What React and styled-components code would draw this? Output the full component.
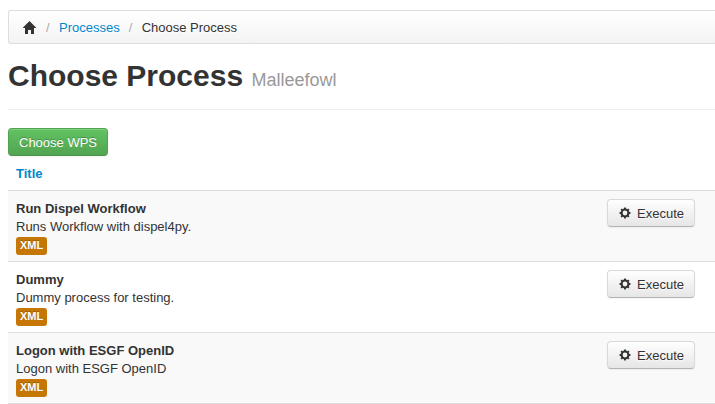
import React from "react";
import styled, { createGlobalStyle } from "styled-components";

const GlobalStyle = createGlobalStyle`
  * { box-sizing: border-box; }
  body {
    margin: 0;
    background: #fff;
    color: #333;
    font: 13px/18px "Liberation Sans", Arial, sans-serif;
  }
`;

const Page = styled.main`
  padding: 10px 0 0 8px;
`;

const Link = styled.a`
  color: #0088cc;
  text-decoration: none;
  &:hover { color: #005580; text-decoration: underline; }
`;

const Breadcrumb = styled.ol`
  display: flex;
  align-items: center;
  margin: 0 0 14px;
  padding: 8px 14px 6px;
  list-style: none;
  border: 1px solid #ddd;
  border-right: 0;
  border-radius: 3px 0 0 3px;
  background: linear-gradient(#fff, #f3f3f3);
  box-shadow: inset 0 1px 0 #fff;
`;

const Crumb = styled.li`
  display: flex;
  align-items: center;
  text-shadow: 0 1px 0 #fff;
  & + &::before {
    content: "/";
    width: 4px;
    margin: 0 9px;
    color: #aaa;
  }
`;

const HomeLink = styled.a`
  display: flex;
  color: #333;
`;

const PageHeader = styled.header`
  margin-bottom: 18px;
  padding-bottom: 15px;
  border-bottom: 1px solid #eee;
`;

const Heading = styled.h1`
  margin: 0;
  font-size: 30px;
  line-height: 36px;
`;

const Subtitle = styled.small`
  color: #999;
  font-size: 18px;
  font-weight: 400;
  line-height: 18px;
`;

const Button = styled.button`
  display: inline-flex;
  align-items: center;
  gap: 5px;
  padding: 5px 10px 3px;
  border: 1px solid;
  border-radius: 4px;
  font: inherit;
  white-space: nowrap;
  cursor: pointer;
  box-shadow: inset 0 1px 0 rgba(255, 255, 255, 0.2), 0 1px 2px rgba(0, 0, 0, 0.05);
`;

const SuccessButton = styled(Button)`
  display: flex;
  border-color: #51a351 #51a351 #499249;
  background: linear-gradient(#62c462, #51a351) border-box;
  color: #fff;
  text-shadow: 0 -1px 0 rgba(0, 0, 0, 0.25);
`;

const DefaultButton = styled(Button)`
  border-color: #d9d9d9 #d9d9d9 #b3b3b3;
  background: linear-gradient(#fff, #e6e6e6);
  color: #333;
  text-shadow: 0 1px 1px rgba(255, 255, 255, 0.75);
`;

const Table = styled.table`
  width: 100%;
  border-spacing: 0;
`;

const HeadCell = styled.th`
  padding: 9px 8px 7px;
  text-align: left;
`;

const Row = styled.tr`
  &:nth-child(odd) { background: #f9f9f9; }
`;

const Cell = styled.td`
  padding: 9px 8px 7px;
  border-top: 1px solid #ddd;
  vertical-align: top;
  tbody > tr:last-child > & { border-bottom: 1px solid #ddd; }
`;

const ActionCell = styled(Cell)`
  width: 116px;
  padding: 8px;
`;

const Name = styled.strong`
  display: block;
`;

const Description = styled.div``;

const Formats = styled.div`
  display: flex;
  height: 18px;
  padding-top: 1px;
`;

const Label = styled.a`
  flex: none;
  height: 18px;
  padding: 0 4px;
  border-radius: 3px;
  background: #c67605;
  color: #fff;
  font-size: 11px;
  font-weight: 700;
  line-height: 17px;
  text-decoration: none;
  text-shadow: 0 -1px 0 rgba(0, 0, 0, 0.25);
`;

const Icon = styled.svg`
  display: block;
  flex: none;
  width: 14px;
  height: 14px;
  fill: currentColor;
`;

const HomeIcon = () => (
  <Icon viewBox="0 0 14 14" aria-hidden="true">
    <path d="M6.5 0 L13 6.4 V7 H11 V13 H8 V9 H5 V13 H2 V7 H0 V6.4 Z" />
  </Icon>
);

const teeth = [0, 45, 90, 135, 180, 225, 270, 315];

const CogIcon = () => (
  <Icon viewBox="0 0 14 14" aria-hidden="true">
    <circle cx="7" cy="6" r="3.4" fill="none" stroke="currentColor" strokeWidth="2" />
    {teeth.map((angle) => (
      <path key={angle} d="M5.8 2.1 L6.2 0.5 H7.8 L8.2 2.1 Z" transform={`rotate(${angle} 7 6)`} />
    ))}
  </Icon>
);

const processes = [
  { name: "Run Dispel Workflow", description: "Runs Workflow with dispel4py." },
  { name: "Dummy", description: "Dummy process for testing." },
  { name: "Logon with ESGF OpenID", description: "Logon with ESGF OpenID" },
];

export default function App() {
  return (
    <>
      <GlobalStyle />
      <Page>
        <nav aria-label="Breadcrumb">
          <Breadcrumb>
            <Crumb>
              <HomeLink href="#home" aria-label="Home"><HomeIcon /></HomeLink>
            </Crumb>
            <Crumb><Link href="#processes">Processes</Link></Crumb>
            <Crumb aria-current="page">Choose Process</Crumb>
          </Breadcrumb>
        </nav>
        <PageHeader>
          <Heading>Choose Process <Subtitle>Malleefowl</Subtitle></Heading>
        </PageHeader>
        <SuccessButton type="button">Choose WPS</SuccessButton>
        <Table>
          <thead>
            <tr>
              <HeadCell scope="col"><Link href="#title">Title</Link></HeadCell>
              <HeadCell as="td" />
            </tr>
          </thead>
          <tbody>
            {processes.map(({ name, description }) => (
              <Row key={name}>
                <Cell>
                  <Name>{name}</Name>
                  <Description>{description}</Description>
                  <Formats><Label href="#xml">XML</Label></Formats>
                </Cell>
                <ActionCell>
                  <DefaultButton type="button"><CogIcon />Execute</DefaultButton>
                </ActionCell>
              </Row>
            ))}
          </tbody>
        </Table>
      </Page>
    </>
  );
}
